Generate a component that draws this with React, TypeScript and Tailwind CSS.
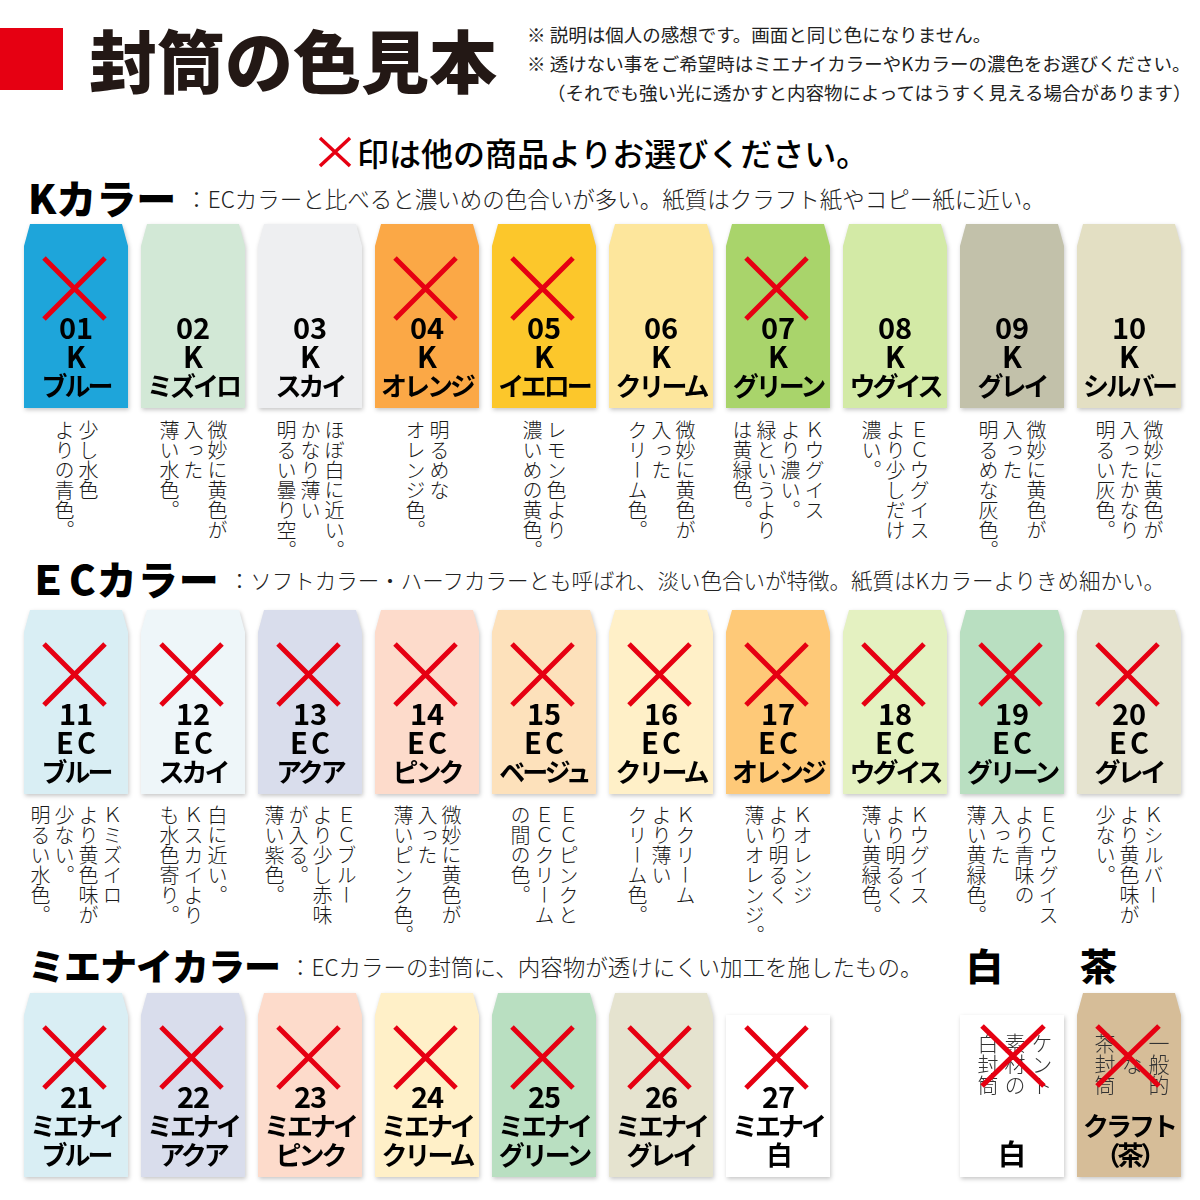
import type { ReactNode } from "react";

// 封筒の色見本

type Env = {
  no: string;
  name: string;
  bg: string;
  x?: boolean;
  desc: string[];
};

const kRow: Env[] = [
  { no: "01", name: "ブルー", bg: "bg-[#1ea5da]", x: true, desc: ["少し水色", "よりの青色。"] },
  { no: "02", name: "ミズイロ", bg: "bg-[#d2e8d6]", desc: ["微妙に黄色が", "入った", "薄い水色。"] },
  { no: "03", name: "スカイ", bg: "bg-[#eeeff1]", desc: ["ほぼ白に近い。", "かなり薄い", "明るい曇り空。"] },
  { no: "04", name: "オレンジ", bg: "bg-[#fba846]", x: true, desc: ["明るめな", "オレンジ色。"] },
  { no: "05", name: "イエロー", bg: "bg-[#fcc72b]", x: true, desc: ["レモン色より", "濃いめの黄色。"] },
  { no: "06", name: "クリーム", bg: "bg-[#fde69c]", desc: ["微妙に黄色が", "入った", "クリーム色。"] },
  { no: "07", name: "グリーン", bg: "bg-[#a9d46b]", x: true, desc: ["Ｋウグイス", "より濃い。", "緑というより", "は黄緑色。"] },
  { no: "08", name: "ウグイス", bg: "bg-[#d3eaa6]", desc: ["ＥＣウグイス", "より少しだけ", "濃い。"] },
  { no: "09", name: "グレイ", bg: "bg-[#c2c1aa]", desc: ["微妙に黄色が", "入った", "明るめな灰色。"] },
  { no: "10", name: "シルバー", bg: "bg-[#e3dfc3]", desc: ["微妙に黄色が", "入ったかなり", "明るい灰色。"] },
];

const ecRow: Env[] = [
  { no: "11", name: "ブルー", bg: "bg-[#d9eef4]", x: true, desc: ["Ｋミズイロ", "より黄色味が", "少ない。", "明るい水色。"] },
  { no: "12", name: "スカイ", bg: "bg-[#eef6f9]", x: true, desc: ["白に近い。", "Ｋスカイより", "も水色寄り。"] },
  { no: "13", name: "アクア", bg: "bg-[#d9ddec]", x: true, desc: ["ＥＣブルー", "より少し赤味", "が入る。", "薄い紫色。"] },
  { no: "14", name: "ピンク", bg: "bg-[#fddbcb]", x: true, desc: ["微妙に黄色が", "入った", "薄いピンク色。"] },
  { no: "15", name: "ベージュ", bg: "bg-[#fde1bb]", x: true, desc: ["ＥＣピンクと", "ＥＣクリーム", "の間の色。"] },
  { no: "16", name: "クリーム", bg: "bg-[#fff0c8]", x: true, desc: ["Ｋクリーム", "より薄い", "クリーム色。"] },
  { no: "17", name: "オレンジ", bg: "bg-[#fec978]", x: true, desc: ["Ｋオレンジ", "より明るく", "薄いオレンジ。"] },
  { no: "18", name: "ウグイス", bg: "bg-[#e4f1c1]", x: true, desc: ["Ｋウグイス", "より明るく", "薄い黄緑色。"] },
  { no: "19", name: "グリーン", bg: "bg-[#b9dfc1]", x: true, desc: ["ＥＣウグイス", "より青味の", "入った", "薄い黄緑色。"] },
  { no: "20", name: "グレイ", bg: "bg-[#e5e3cf]", x: true, desc: ["Ｋシルバー", "より黄色味が", "少ない。"] },
];

const mienaiRow = [
  { no: "21", name: "ブルー", bg: "bg-[#d9eef4]" },
  { no: "22", name: "アクア", bg: "bg-[#d9ddec]" },
  { no: "23", name: "ピンク", bg: "bg-[#fddbcb]" },
  { no: "24", name: "クリーム", bg: "bg-[#fff0c8]" },
  { no: "25", name: "グリーン", bg: "bg-[#b9dfc1]" },
  { no: "26", name: "グレイ", bg: "bg-[#e5e3cf]" },
  { no: "27", name: "白", bg: "bg-white", white: true },
];

function Cross({ className }: { className: string }) {
  return (
    <svg className={className} viewBox="0 0 67 67" fill="none" preserveAspectRatio="none">
      <path d="M3 3L64 64M64 3L3 64" stroke="#e60012" strokeWidth="5" />
    </svg>
  );
}

function Envelope({
  bg,
  crossed,
  flap = true,
  over,
  children,
}: {
  bg: string;
  crossed?: boolean;
  flap?: boolean;
  over?: ReactNode;
  children: ReactNode;
}) {
  return (
    <div className="w-[104px] shrink-0 drop-shadow-[1px_2px_2px_rgba(0,0,0,0.22)]">
      <div
        className={`h-[22px] ${flap ? bg : ""} [clip-path:polygon(6px_0,calc(100%_-_6px)_0,100%_100%,0_100%)]`}
      />
      <div className={`relative flex h-[162px] flex-col items-center justify-end pb-[9px] ${bg}`}>
        {over}
        {crossed && <Cross className="absolute left-[17px] top-[9px] h-[67px] w-[67px]" />}
        <div className="relative flex flex-col items-center whitespace-nowrap font-bold leading-[29px] text-black">
          {children}
        </div>
      </div>
    </div>
  );
}

function Desc({ lines }: { lines: string[] }) {
  return (
    <div className="flex h-[136px] w-[104px] shrink-0 justify-center">
      <div className="h-[144px] text-[20px] font-light leading-[24px] text-[#1a1a1a] [writing-mode:vertical-rl]">
        {lines.map((l) => (
          <div key={l} className="whitespace-nowrap">
            {l}
          </div>
        ))}
      </div>
    </div>
  );
}

function Heading({
  title,
  note,
  size,
  noteSize,
}: {
  title: string;
  note: string;
  size: string;
  noteSize: string;
}) {
  return (
    <div className="flex items-center pl-[28px]">
      <div className={`whitespace-nowrap font-black text-black ${size}`}>{title}</div>
      <div className={`ml-[9px] mt-[4px] whitespace-nowrap font-light text-[#222] ${noteSize}`}>{note}</div>
    </div>
  );
}

export default function App() {
  return (
    <div className="relative h-[1200px] w-[1200px] overflow-hidden bg-white font-['Noto_Sans_CJK_JP','Noto_Sans',sans-serif] text-black">
      {/* header */}
      <div className="flex h-[110px] pt-[20px]">
        <div className="mt-[8px] h-[62px] w-[63px] shrink-0 bg-[#e60012]" />
        <h1 className="ml-[26px] mt-[2px] whitespace-nowrap text-[68px] font-black leading-[74px] text-[#231815]">
          封筒の色見本
        </h1>
        <div className="ml-[30px] whitespace-nowrap text-[18.5px] leading-[29px] text-[#222]">
          <div>※ 説明は個人の感想です。画面と同じ色になりません。</div>
          <div>※ 透けない事をご希望時はミエナイカラーやKカラーの濃色をお選びください。</div>
          <div className="pl-[20px]">（それでも強い光に透かすと内容物によってはうすく見える場合があります）</div>
        </div>
      </div>

      <div className="mt-[22px] flex h-[40px] items-center pl-[318px]">
        <svg className="h-[32px] w-[34px]" viewBox="0 0 34 32" fill="none">
          <path d="M2 2L32 30M32 2L2 30" stroke="#e60012" strokeWidth="3.5" />
        </svg>
        <span className="ml-[5px] whitespace-nowrap text-[32px] font-medium leading-[40px]">
          印は他の商品よりお選びください。
        </span>
      </div>

      {/* K color */}
      <div className="mt-[3px] h-[44px]">
        <Heading
          title="Kカラー"
          size="text-[40px] leading-[44px]"
          noteSize="text-[22.5px]"
          note="：ECカラーと比べると濃いめの色合いが多い。紙質はクラフト紙やコピー紙に近い。"
        />
      </div>
      <div className="mt-[5px] flex gap-[13px] pl-[24px]">
        {kRow.map((e) => (
          <Envelope key={e.no} bg={e.bg} crossed={e.x}>
            <span className="text-[29px]">{e.no}</span>
            <span className="text-[29px]">K</span>
            <span className="text-[26px] tracking-[-3px]">{e.name}</span>
          </Envelope>
        ))}
      </div>
      <div className="mt-[12px] flex gap-[13px] pl-[24px]">
        {kRow.map((e) => (
          <Desc key={e.no} lines={e.desc} />
        ))}
      </div>

      {/* EC color */}
      <div className="h-[44px]">
        <Heading
          title="ＥCカラー"
          size="text-[40px] leading-[44px] tracking-[1px]"
          noteSize="text-[21.5px]"
          note="：ソフトカラー・ハーフカラーとも呼ばれ、淡い色合いが特徴。紙質はKカラーよりきめ細かい。"
        />
      </div>
      <div className="mt-[10px] flex gap-[13px] pl-[24px]">
        {ecRow.map((e) => (
          <Envelope key={e.no} bg={e.bg} crossed={e.x}>
            <span className="text-[29px]">{e.no}</span>
            <span className="pl-[3px] text-[29px] tracking-[3px]">EC</span>
            <span className="text-[26px] tracking-[-3px]">{e.name}</span>
          </Envelope>
        ))}
      </div>
      <div className="mt-[11px] flex gap-[13px] pl-[24px]">
        {ecRow.map((e) => (
          <Desc key={e.no} lines={e.desc} />
        ))}
      </div>

      {/* mienai color */}
      <div className="mt-[4px] flex h-[40px] items-center">
        <div className="w-[936px] shrink-0">
          <Heading
            title="ミエナイカラー"
            size="text-[37px] leading-[40px] tracking-[-1px]"
            noteSize="text-[22.5px]"
            note="：ECカラーの封筒に、内容物が透けにくい加工を施したもの。"
          />
        </div>
        <div className="ml-[30px] text-[37px] font-black leading-[40px]">白</div>
        <div className="ml-[77px] text-[37px] font-black leading-[40px]">茶</div>
      </div>
      <div className="mt-[8px] flex gap-[13px] pl-[24px]">
        {mienaiRow.map((e) => (
          <Envelope key={e.no} bg={e.bg} crossed flap={!e.white}>
            <span className="text-[29px] tracking-[-1px]">{e.no}</span>
            <span className="text-[26px] tracking-[-3px]">ミエナイ</span>
            <span className="text-[26px] tracking-[-3px]">{e.name}</span>
          </Envelope>
        ))}
        <div className="w-[104px] shrink-0" />
        <Envelope
          bg="bg-white"
          flap={false}
          over={
            <>
              <div className="absolute left-[14px] top-[18px] h-[66px] text-[21px] font-light leading-[27px] text-[#333] [writing-mode:vertical-rl]">
                <div>ケント</div>
                <div>素材の</div>
                <div>白封筒</div>
              </div>
              <Cross className="absolute left-[19px] top-[8px] h-[66px] w-[68px]" />
            </>
          }
        >
          <span className="text-[28px]">白</span>
        </Envelope>
        <Envelope
          bg="bg-[#d6bd98]"
          over={
            <>
              <div className="absolute left-[14px] top-[18px] h-[66px] text-[21px] font-light leading-[27px] text-[#333] [writing-mode:vertical-rl]">
                <div>一般的</div>
                <div>　な</div>
                <div>茶封筒</div>
              </div>
              <Cross className="absolute left-[17px] top-[8px] h-[66px] w-[68px]" />
            </>
          }
        >
          <span className="text-[26px] tracking-[-3px]">クラフト</span>
          <span className="text-[26px] tracking-[-3px]">（茶）</span>
        </Envelope>
      </div>
    </div>
  );
}
